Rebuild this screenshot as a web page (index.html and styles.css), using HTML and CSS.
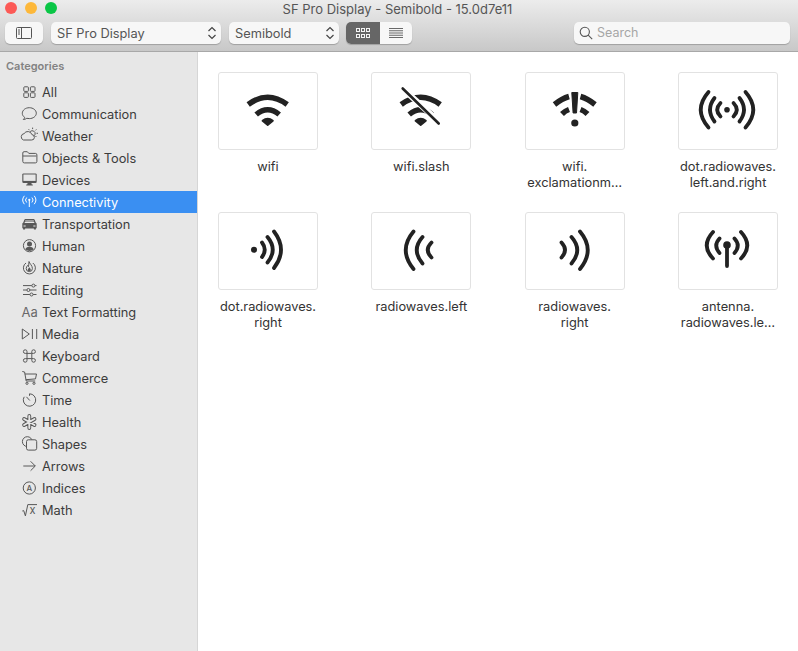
FILE: index.html
```html
<!DOCTYPE html>
<html lang="en">
<head>
  <meta charset="UTF-8">
  <title>SF Pro Display - Semibold - 15.0d7e11</title>
  <link rel="stylesheet" href="styles.css">
</head>
<body>
  <div class="window">
    <header class="topbar">
      <div class="titlebar">
        <div class="lights">
          <span class="light red"></span>
          <span class="light yellow"></span>
          <span class="light green"></span>
        </div>
        <div class="title">SF Pro Display - Semibold - 15.0d7e11</div>
      </div>
      <div class="toolbar">
        <button class="tool toggle">
          <svg class="tool-icon" width="18" height="14" viewBox="0 0 18 14">
            <rect x="1.5" y="1.5" width="15" height="11" rx="1"/>
            <path d="M6.5 1.5v11M3 4h2M3 6h2M3 8h2"/>
          </svg>
        </button>
        <button class="tool popup family">
          <span>SF Pro Display</span>
          <svg class="chevrons" width="10" height="14" viewBox="0 0 10 14"><path d="M1.5 5 5 1.5 8.5 5M1.5 9 5 12.5 8.5 9"/></svg>
        </button>
        <button class="tool popup weight">
          <span>Semibold</span>
          <svg class="chevrons" width="10" height="14" viewBox="0 0 10 14"><path d="M1.5 5 5 1.5 8.5 5M1.5 9 5 12.5 8.5 9"/></svg>
        </button>
        <div class="segment">
          <button class="seg on">
            <svg width="14" height="10" viewBox="0 0 14 10" class="seg-grid">
              <rect x=".5" y=".5" width="3" height="3"/><rect x="5.5" y=".5" width="3" height="3"/><rect x="10.5" y=".5" width="3" height="3"/>
              <rect x=".5" y="6.5" width="3" height="3"/><rect x="5.5" y="6.5" width="3" height="3"/><rect x="10.5" y="6.5" width="3" height="3"/>
            </svg>
          </button>
          <button class="seg">
            <svg width="14" height="10" viewBox="0 0 14 10" class="seg-list"><path d="M0 .5h14M0 2.75h14M0 5h14M0 7.25h14M0 9.5h14"/></svg>
          </button>
        </div>
        <div class="search">
          <svg class="search-icon" width="14" height="14" viewBox="0 0 14 14"><circle cx="5.8" cy="5.8" r="4.6"/><path d="m9.2 9.2 4 4"/></svg>
          <span class="search-text">Search</span>
        </div>
      </div>
    </header>

    <div class="main">
      <aside class="sidebar">
        <div class="side-head">Categories</div>
        <ul class="cats">
          <li class="cat"><svg class="cat-icon" viewBox="0 0 20 20"><rect x="3.8" y="4.8" width="4.6" height="4.6" rx=".8"/><rect x="10.4" y="4.8" width="4.6" height="4.6" rx=".8"/><rect x="3.8" y="10.8" width="4.6" height="4.6" rx=".8"/><rect x="10.4" y="10.8" width="4.6" height="4.6" rx=".8"/></svg>All</li>
          <li class="cat"><svg class="cat-icon" viewBox="0 0 20 20"><path d="M9.3 3.7c-3.9 0-7 2.5-7 5.6 0 1.7.9 3.1 2.4 4.1-.2.9-.8 1.6-1.4 2.1 1.3 0 2.6-.5 3.5-1.2.8.2 1.6.3 2.5.3 3.9 0 7-2.4 7-5.4s-3.1-5.5-7-5.5z"/></svg>Communication</li>
          <li class="cat"><svg class="cat-icon" viewBox="0 0 20 20"><path d="M3.5 14h8a2.7 2.7 0 0 0 .4-5.4 4.3 4.3 0 0 0-7.8-1 3.3 3.3 0 0 0-.6 6.4z"/><path d="M10.2 5.6a2.9 2.9 0 0 1 4.8 3 2.9 2.9 0 0 1-1.3 1.4M12.6 1.6v1.5M16.4 3.4l-1 1M18 7.3h-1.5M16.4 11l-1-1M8.6 3.2l.8 1"/></svg>Weather</li>
          <li class="cat"><svg class="cat-icon" viewBox="0 0 20 20"><path d="M2.8 13.4V5a1.3 1.3 0 0 1 1.3-1.3h3.2l1.5 1.7h6.6a1.5 1.5 0 0 1 1.5 1.5v6.5a1.5 1.5 0 0 1-1.5 1.5H4.3a1.5 1.5 0 0 1-1.5-1.5zM2.8 8h13.6"/></svg>Objects &amp; Tools</li>
          <li class="cat"><svg class="cat-icon" viewBox="0 0 20 20"><rect class="solid" x="2.3" y="3.4" width="14.4" height="9.6" rx="1.2"/><rect class="hole" x="3.4" y="4.5" width="12.2" height="6.4"/><path class="solid" d="M7.6 13h3.8l.4 1.6h1v.8H6.2v-.8h1z"/></svg>Devices</li>
          <li class="cat active"><svg class="cat-icon" viewBox="0 0 20 20"><circle class="solid" cx="9.3" cy="7.8" r="1.1"/><path d="M9.3 8v7M6.7 5.5a3.6 3.6 0 0 0 0 5M11.9 5.5a3.6 3.6 0 0 1 0 5M4.4 3.8a6.6 6.6 0 0 0 0 8.4M14.2 3.8a6.6 6.6 0 0 1 0 8.4"/></svg>Connectivity</li>
          <li class="cat"><svg class="cat-icon" viewBox="0 0 20 20"><path class="solid" d="M5.8 5h7.4c.8 0 1.4.5 1.7 1.2l.8 2.3 1 .9v4.3c0 .4-.3.8-.8.8v1h-2v-1H5.1v1h-2v-1c-.5 0-.8-.4-.8-.8V9.4l1-.9.8-2.3C4.4 5.5 5 5 5.8 5z"/><path class="hole-line" d="M4.7 8.5h9.6M5.2 7h8.6M3.5 12h2.2M13.3 12h2.2"/></svg>Transportation</li>
          <li class="cat"><svg class="cat-icon" viewBox="0 0 20 20"><circle cx="9.5" cy="9.7" r="6.1"/><circle class="solid" cx="9.5" cy="8" r="2.5"/><path class="solid" d="M5.2 13.3c.8-1.700 2.4-2.500 4.3-2.500s3.500.8 4.300 2.500a6 6 0 0 1-8.600 0z"/></svg>Human</li>
          <li class="cat"><svg class="cat-icon" viewBox="0 0 20 20"><path d="M6 5a6 6 0 1 0 6.8 0"/><path d="M9 3.500c.5 2.200 3.400 3.900 3.400 7a3.100 3.100 0 0 1-6.200 0c0-1.400.7-2.200 1.300-3 .3.700.6 1 1 1.200.4-1.700.2-3.500.5-5.200z"/><path class="solid" d="M9.300 9c.2 1 1.500 1.500 1.500 2.800a1.500 1.500 0 0 1-3 0c0-1 1.200-1.700 1.500-2.800z"/></svg>Nature</li>
          <li class="cat"><svg class="cat-icon" viewBox="0 0 20 20"><path d="M3 5.6h8.800M15 5.600h1.500M3 10h3.800M10 10h6.500M3 14.500h6.900M13.100 14.500h3.400"/><circle cx="13.4" cy="5.6" r="1.5"/><circle cx="8.4" cy="10" r="1.5"/><circle cx="11.5" cy="14.5" r="1.5"/></svg>Editing</li>
          <li class="cat"><svg class="cat-icon" viewBox="0 0 20 20"><text class="cat-glyph" x="1.6" y="14.7">Aa</text></svg>Text Formatting</li>
          <li class="cat"><svg class="cat-icon" viewBox="0 0 20 20"><path d="M2.3 5v10l7-5zM12.4 5v10M16.7 5v10"/></svg>Media</li>
          <li class="cat"><svg class="cat-icon" viewBox="0 0 20 20"><path d="M7 7.4h4.800v5.200H7zM7 7.400H5.300A1.800 1.800 0 1 1 7 5.700v1.700M11.800 7.400V5.700a1.800 1.800 0 1 1 1.700 1.700h-1.700M11.800 12.600h1.700a1.800 1.800 0 1 1-1.700 1.700v-1.700M7 12.600v1.700a1.800 1.800 0 1 1-1.700-1.700H7"/></svg>Keyboard</li>
          <li class="cat"><svg class="cat-icon" viewBox="0 0 20 20"><path d="M2.3 3.500 4.600 4l1.600 9h9M4.900 6h11.600l-1 4.900-9.700.8"/><circle cx="7" cy="15.3" r="1.1"/><circle cx="14" cy="15.3" r="1.1"/></svg>Commerce</li>
          <li class="cat"><svg class="cat-icon" viewBox="0 0 20 20"><path d="M9.5 3.800a6.200 6.200 0 1 1-5.300 3"/><path d="m6.400 6.800 3.400 3.700M9.500 3.800v2"/></svg>Time</li>
          <li class="cat"><svg class="cat-icon" viewBox="0 0 20 20"><g class="petal-out"><path d="M9.3 4v12M4.100 7l10.400 6M14.500 7 4.100 13"/></g><g class="petal-in"><path d="M9.3 4v12M4.100 7l10.400 6M14.500 7 4.100 13"/></g></svg>Health</li>
          <li class="cat"><svg class="cat-icon" viewBox="0 0 20 20"><circle cx="7.3" cy="7.6" r="4.9"/><rect class="hole" x="6.5" y="5.8" width="10.200" height="10.300" rx="1.800"/><rect x="6.5" y="5.8" width="10.200" height="10.300" rx="1.800"/></svg>Shapes</li>
          <li class="cat"><svg class="cat-icon" viewBox="0 0 20 20"><path d="M3.3 10h11.900M10.600 5.300l4.700 4.700-4.700 4.700"/></svg>Arrows</li>
          <li class="cat"><svg class="cat-icon" viewBox="0 0 20 20"><circle cx="9.3" cy="10" r="6.1"/><text class="cat-letter" x="9.3" y="12.9">A</text></svg>Indices</li>
          <li class="cat"><svg class="cat-icon" viewBox="0 0 20 20"><path d="M2.3 11l1.400-.4 1.700 5.300 2.400-11.300h9.200"/><text class="cat-x" x="9.5" y="14.4">x</text></svg>Math</li>
        </ul>
      </aside>

      <section class="content">
        <div class="grid">
          <figure class="item">
            <div class="tile">
              <svg class="symbol" viewBox="-0.7 0 100 78">
                <path d="M29.5 32.500Q49 18 68.500 32.500M37.500 42.500Q49 33 60.500 42.500"/>
                <path class="fan" d="M43.8 48.700Q49 44.500 54.200 48.700L49 53Z"/>
              </svg>
            </div>
            <figcaption class="name">wifi</figcaption>
          </figure>
          <figure class="item">
            <div class="tile">
              <svg class="symbol" viewBox="-0.7 0 100 78">
                <path d="M29.5 32.500Q49 18 68.500 32.500M37.500 42.500Q49 33 60.500 42.500"/>
                <path class="fan" d="M43.8 48.700Q49 44.500 54.200 48.700L49 53Z"/>
                <path class="cut" d="M32 17.500 72 54"/>
                <path class="slash" d="M31 16.500 67 51.500"/>
              </svg>
            </div>
            <figcaption class="name">wifi.slash</figcaption>
          </figure>
          <figure class="item">
            <div class="tile">
              <svg class="symbol" viewBox="0 0 100 78">
                <path d="M29.5 32.500Q37 26.500 44 24.500M55.500 24.500Q62.500 26.500 70 32.500M37 42Q40 39 44 37.500M55.500 37.500Q59.500 39 62.500 42"/>
                <path class="bar" d="M46.800 20.500h6L51.500 41h-3.400z"/>
                <circle class="dot" cx="49.8" cy="51" r="3.6"/>
              </svg>
            </div>
            <figcaption class="name">wifi.<br>exclamationm…</figcaption>
          </figure>
          <figure class="item">
            <div class="tile">
              <svg class="symbol thin" viewBox="0 0 100 78">
                <circle class="dot" cx="49" cy="37.7" r="2.8"/>
                <path d="M55.5 31Q62 37.7 55.5 44.5M61.5 26Q70.500 37.7 61.5 49.5M67.5 20Q83 37.7 67.5 55.5"/>
                <path d="M42.5 31Q36 37.7 42.5 44.5M36.5 26Q27.500 37.7 36.5 49.5M30.5 20Q15 37.7 30.5 55.5"/>
              </svg>
            </div>
            <figcaption class="name">dot.radiowaves.<br>left.and.right</figcaption>
          </figure>
          <figure class="item">
            <div class="tile">
              <svg class="symbol thin" viewBox="0 0 100 78">
                <circle class="dot" cx="36" cy="37.7" r="3"/>
                <path d="M44 30.5Q49.5 37.7 44 45M49.5 25Q60 37.7 49.5 50.5M56 19.5Q70 37.7 56 56"/>
              </svg>
            </div>
            <figcaption class="name">dot.radiowaves.<br>right</figcaption>
          </figure>
          <figure class="item">
            <div class="tile">
              <svg class="symbol thin" viewBox="0 0 100 78">
                <path d="M42.5 19.5Q27 38 42.5 57M51.5 25Q40 38 51.5 51.5M60.5 30.5Q53 38 60.5 45.5"/>
              </svg>
            </div>
            <figcaption class="name">radiowaves.left</figcaption>
          </figure>
          <figure class="item">
            <div class="tile">
              <svg class="symbol thin" viewBox="0 0 100 78">
                <path d="M36.5 30.5Q43.5 38 36.5 45.5M46.5 25Q58 38 46.5 51.5M55 19.5Q70.5 38 55 57"/>
              </svg>
            </div>
            <figcaption class="name">radiowaves.<br>right</figcaption>
          </figure>
          <figure class="item">
            <div class="tile">
              <svg class="symbol thin" viewBox="0 0 100 78">
                <circle class="dot" cx="49" cy="33" r="3.8"/>
                <path class="pole" d="M49 33v21"/>
                <path d="M41.5 26.5Q35 33.5 41.5 41M56.5 26.5Q63 33.5 56.5 41M35 20Q22.5 33.5 35 46.5M63 20Q75.5 33.5 63 46.5"/>
              </svg>
            </div>
            <figcaption class="name">antenna.<br>radiowaves.le…</figcaption>
          </figure>
        </div>
      </section>
    </div>
  </div>
</body>
</html>
```
FILE: styles.css
```css
* {
  box-sizing: border-box;
}
html, body {
  margin: 0;
  height: 100%;
  overflow: hidden;
}
body {
  font-family: Inter, "Noto Sans", sans-serif;
  font-size: 12.8px;
  color: #333;
  background: #fff;
}
.window {
  display: flex;
  flex-direction: column;
  height: 100%;
}

/* title + toolbar */
.topbar {
  height: 52px;
  flex: none;
  background: linear-gradient(#ececec, #c8c8c8);
  border-bottom: 1px solid #a8a8a8;
}
.titlebar {
  height: 22px;
  position: relative;
  display: flex;
  align-items: center;
}
.lights {
  position: absolute;
  left: 5px;
  top: 2px;
  display: flex;
  gap: 8px;
}
.light {
  width: 12px;
  height: 12px;
  border-radius: 50%;
}
.red { background: #fc5a56; }
.yellow { background: #fdb83a; }
.green { background: #0ac646; }
.title {
  flex: 1;
  text-align: center;
  font-size: 13px;
  color: #555;
  line-height: 16px;
  margin-top: -5px;
  padding-right: 3px;
}
.toolbar {
  display: flex;
  align-items: flex-start;
  padding: 0 8px 0 5px;
}
.tool {
  height: 22px;
  padding: 0;
  border: none;
  border-radius: 5px;
  background: #f7f7f7;
  box-shadow: 0 1px 1px rgba(0, 0, 0, .22);
  font: inherit;
  color: #555;
}
.toggle {
  width: 38px;
  margin-right: 8px;
  display: flex;
  align-items: center;
  justify-content: center;
}
.tool-icon {
  fill: none;
  stroke: #555;
  stroke-width: 1;
}
.popup {
  display: flex;
  align-items: center;
  justify-content: space-between;
  padding: 0 4px 0 6px;
  margin-right: 8px;
}
.family { width: 170px; }
.weight { width: 110px; margin-right: 7px; }
.chevrons {
  fill: none;
  stroke: #444;
  stroke-width: 1.2;
}
.segment {
  display: flex;
  width: 66px;
  height: 22px;
  border-radius: 5px;
  overflow: hidden;
  background: #f7f7f7;
  box-shadow: 0 1px 1px rgba(0, 0, 0, .22);
}
.seg {
  flex: 1;
  padding: 0;
  border: none;
  background: none;
  display: flex;
  align-items: center;
  justify-content: center;
}
.seg.on {
  flex: none;
  width: 34px;
  background: #666;
}
.seg-grid {
  fill: none;
  stroke: #f4f4f4;
}
.seg-list {
  fill: none;
  stroke: #444;
  stroke-width: .8;
}
.search {
  width: 216px;
  height: 22px;
  margin-left: auto;
  display: flex;
  align-items: center;
  gap: 4px;
  padding-left: 5px;
  border-radius: 5px;
  background: #f7f7f7;
  box-shadow: 0 1px 1px rgba(0, 0, 0, .22);
  color: #a6a6a6;
  font-size: 12.5px;
}
.search-text {
  margin-top: -2px;
}
.search-icon {
  fill: none;
  stroke: #555;
  stroke-width: 1.1;
}

/* sidebar */
.main {
  flex: 1;
  display: flex;
  min-height: 0;
}
.sidebar {
  width: 198px;
  flex: none;
  background: #e7e7e7;
  border-right: 1px solid #d6d6d6;
}
.side-head {
  height: 29px;
  padding: 7px 0 0 6px;
  font-size: 11px;
  line-height: 14px;
  font-weight: 600;
  color: #828282;
}
.cats {
  list-style: none;
  margin: 0;
  padding: 0;
}
.cat {
  height: 22px;
  display: flex;
  align-items: center;
  gap: 2px;
  padding-left: 20px;
  color: #3c3c3c;
}
.cat.active {
  background: #3a8ff2;
  color: #fff;
}
.cat-icon {
  width: 20px;
  height: 20px;
  flex: none;
  fill: none;
  stroke: #585858;
  stroke-width: 1;
}
.active .cat-icon {
  stroke: #fff;
}
.cat-icon .solid {
  fill: #585858;
  stroke: none;
}
.active .cat-icon .solid {
  fill: #fff;
}
.cat-icon .hole {
  fill: #e7e7e7;
  stroke: none;
}
.hole-line {
  stroke: #e7e7e7;
  stroke-width: 1;
}
.cat-glyph {
  font-size: 13px;
  fill: #6a6a6a;
  stroke: none;
}
.cat-letter {
  font-size: 8px;
  font-weight: 500;
  text-anchor: middle;
  fill: #585858;
  stroke: none;
}
.cat-x {
  font-size: 11px;
  fill: #585858;
  stroke: none;
}
.petal-out {
  stroke-width: 3.8;
  stroke-linecap: round;
}
.petal-in {
  stroke: #e7e7e7;
  stroke-width: 1.9;
  stroke-linecap: round;
}

/* symbol grid */
.content {
  flex: 1;
  padding: 20px 20px 0;
}
.grid {
  display: grid;
  grid-template-columns: repeat(4, 100px);
  grid-auto-rows: 140px;
  justify-content: space-between;
}
.item {
  margin: 0;
}
.tile {
  height: 78px;
  border: 1px solid #e2e2e2;
  border-radius: 3px;
  background: #fff;
  overflow: hidden;
}
.symbol {
  display: block;
  width: 100px;
  height: 78px;
  margin: -1px;
  fill: none;
  stroke: #222;
  stroke-width: 5.5;
}
.symbol.thin {
  stroke-width: 3.8;
  stroke-linecap: round;
}
.symbol .fan {
  fill: #222;
  stroke-width: 1.8;
  stroke-linejoin: round;
}
.symbol .dot {
  fill: #222;
  stroke: none;
}
.symbol .bar {
  fill: #222;
  stroke: #222;
  stroke-width: 1;
  stroke-linejoin: round;
}
.symbol .cut {
  stroke: #fff;
  stroke-width: 6;
}
.symbol .slash {
  stroke-width: 2.6;
  stroke-linecap: round;
}
.name {
  margin: 9px -10px 0;
  text-align: center;
  line-height: 16px;
  color: #333;
}
```
